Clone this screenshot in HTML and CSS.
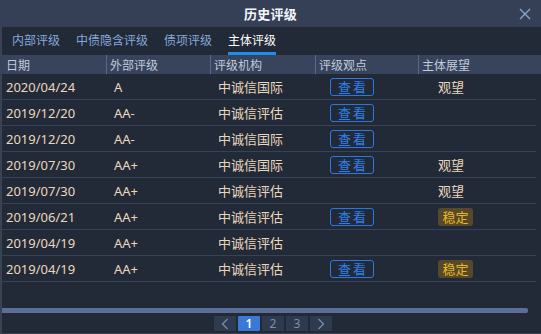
FILE: index.html
```html
<!DOCTYPE html>
<html lang="zh">
<head>
<meta charset="utf-8">
<link rel="stylesheet" href="styles.css">
</head>
<body>
<div class="dialog">
  <div class="titlebar">
    <span class="title">历史评级</span>
    <svg class="close" width="12" height="12" viewBox="0 0 12 12"><path d="M1 1L11 11M11 1L1 11" stroke="#8ea6cf" stroke-width="1.3" fill="none"/></svg>
  </div>
  <div class="tabs">
    <span class="tab">内部评级</span>
    <span class="tab">中债隐含评级</span>
    <span class="tab">债项评级</span>
    <span class="tab active">主体评级</span>
  </div>
  <div class="table">
    <div class="row head">
      <div class="cell">日期</div><div class="cell">外部评级</div><div class="cell">评级机构</div><div class="cell">评级观点</div><div class="cell">主体展望</div>
    </div>
    <div class="row"><div class="cell">2020/04/24</div><div class="cell">A</div><div class="cell">中诚信国际</div><div class="cell"><span class="btn">查看</span></div><div class="cell">观望</div></div>
    <div class="row"><div class="cell">2019/12/20</div><div class="cell">AA-</div><div class="cell">中诚信评估</div><div class="cell"><span class="btn">查看</span></div><div class="cell"></div></div>
    <div class="row"><div class="cell">2019/12/20</div><div class="cell">AA-</div><div class="cell">中诚信国际</div><div class="cell"><span class="btn">查看</span></div><div class="cell"></div></div>
    <div class="row"><div class="cell">2019/07/30</div><div class="cell">AA+</div><div class="cell">中诚信国际</div><div class="cell"><span class="btn">查看</span></div><div class="cell">观望</div></div>
    <div class="row"><div class="cell">2019/07/30</div><div class="cell">AA+</div><div class="cell">中诚信评估</div><div class="cell"></div><div class="cell">观望</div></div>
    <div class="row"><div class="cell">2019/06/21</div><div class="cell">AA+</div><div class="cell">中诚信评估</div><div class="cell"><span class="btn">查看</span></div><div class="cell"><span class="tag">稳定</span></div></div>
    <div class="row"><div class="cell">2019/04/19</div><div class="cell">AA+</div><div class="cell">中诚信评估</div><div class="cell"></div><div class="cell"></div></div>
    <div class="row"><div class="cell">2019/04/19</div><div class="cell">AA+</div><div class="cell">中诚信评估</div><div class="cell"><span class="btn">查看</span></div><div class="cell"><span class="tag">稳定</span></div></div>
  </div>
  <div class="spacer"></div>
  <div class="scrollbar"><div class="thumb"></div></div>
  <div class="pager">
    <span class="pg">
      <svg width="8" height="12" viewBox="0 0 8 12"><path d="M6.5 1L1.5 6L6.5 11" stroke="#7f8fa8" stroke-width="1.2" fill="none"/></svg>
    </span>
    <span class="pg current">1</span>
    <span class="pg">2</span>
    <span class="pg">3</span>
    <span class="pg">
      <svg width="8" height="12" viewBox="0 0 8 12"><path d="M1.5 1L6.5 6L1.5 11" stroke="#7f8fa8" stroke-width="1.2" fill="none"/></svg>
    </span>
  </div>
</div>
</body>
</html>
```
FILE: styles.css
```css
* { box-sizing: border-box; }
html, body { margin: 0; padding: 0; }
body {
  width: 541px;
  height: 334px;
  background: #222a38;
  font-family: "Noto Sans", "Noto Sans CJK SC", sans-serif;
  overflow: hidden;
}
.dialog {
  width: 541px;
  height: 334px;
  display: flex;
  flex-direction: column;
  border-left: 2px solid #3a4354;
  border-bottom: 1px solid #3a4354;
  background: #222a38;
}
.titlebar {
  height: 27px;
  flex: none;
  background: #354057;
  display: flex;
  align-items: center;
  justify-content: center;
  position: relative;
  margin-left: -2px;
}
.title {
  color: #f4f6fa;
  font-size: 13px;
  font-weight: 700;
  letter-spacing: 0.3px;
}
.close {
  position: absolute;
  right: 10px;
  top: 8px;
}
.tabs {
  height: 28px;
  flex: none;
  display: flex;
  align-items: stretch;
  padding-left: 10px;
  gap: 16px;
}
.tab {
  font-size: 12px;
  color: #85a8dc;
  display: flex;
  align-items: center;
  padding-top: 1px;
  border-bottom: 3px solid transparent;
}
.tab.active {
  color: #ffffff;
  border-bottom-color: #1f8cf0;
}
.table {
  display: flex;
  flex-direction: column;
  width: 534px;
}
.row {
  display: grid;
  grid-template-columns: 104px 104px 105px 103px 1fr;
  height: 26px;
  border-bottom: 1px solid #364257;
  align-items: center;
}
.row.head {
  height: 19px;
  width: 539px;
  background: #37445c;
  border-bottom: none;
}
.cell {
  padding-left: 8px;
  font-size: 13px;
  color: #ead8bd;
  white-space: nowrap;
  display: flex;
  align-items: center;
  height: 100%;
}
.cell:first-child { padding-left: 4px; }
.cell:last-child { padding-left: 20px; }
.head .cell {
  color: #c0cbdd;
  font-size: 12px;
  border-left: 1px solid #5a6a86;
  padding-left: 3px;
}
.head .cell:first-child {
  border-left: none;
  padding-left: 4px;
}
.btn {
  display: inline-flex;
  align-items: center;
  justify-content: center;
  width: 44px;
  height: 18px;
  border: 1px solid #2a78e0;
  border-radius: 3px;
  color: #2f80ec;
  font-size: 13px;
  letter-spacing: 2px;
  padding-left: 2px;
  margin-left: 7px;
}
.tag {
  display: inline-flex;
  align-items: center;
  justify-content: center;
  width: 35px;
  height: 18px;
  border-radius: 3px;
  background: #56482a;
  color: #e8b820;
  font-size: 13px;
}
.spacer { flex: 1; }
.scrollbar {
  height: 5px;
  flex: none;
  margin-bottom: 3px;
}
.thumb {
  width: 526px;
  height: 5px;
  background: #5b6f98;
  border-radius: 0 2px 2px 0;
}
.pager {
  height: 15px;
  flex: none;
  display: flex;
  justify-content: center;
  gap: 2px;
  margin-bottom: 2px;
  padding-left: 3px;
}
.pg {
  width: 22px;
  height: 15px;
  background: #2e3a4e;
  color: #7f8fa8;
  font-size: 12px;
  display: flex;
  align-items: center;
  justify-content: center;
  border-radius: 1px;
}
.pg.current {
  background: #3a7ad4;
  color: #ffffff;
  font-weight: 600;
}
```
